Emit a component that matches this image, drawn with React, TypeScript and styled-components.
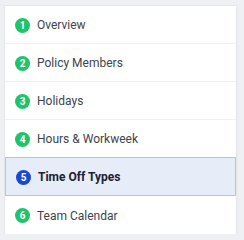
import styled, { createGlobalStyle } from 'styled-components'

const GlobalStyle = createGlobalStyle`
  body {
    margin: 0;
    background: #eff0f4;
    font-family: Roboto, "Open Sans", sans-serif;
  }
`

const Page = styled.div`
  padding: 6px 8px 0 5px;
`

const Card = styled.div`
  width: 231px;
  background: #ffffff;
  box-shadow: 0 0 0 1px #e6e7eb, 1px 1px 2px rgba(0, 0, 0, 0.06);
  display: flex;
  flex-direction: column;
`

const Row = styled.div<{ $active?: boolean }>`
  box-sizing: border-box;
  height: ${(p) => (p.$active ? '39px' : '38px')};
  margin-top: ${(p) => (p.$active ? '-1px' : '0')};
  display: flex;
  align-items: center;
  gap: 7px;
  padding: 1px 0 0 10px;
  background: ${(p) => (p.$active ? '#e6edf9' : '#ffffff')};
  border: ${(p) => (p.$active ? '1px solid #adc6f1' : 'none')};
  border-bottom: 1px solid ${(p) => (p.$active ? '#adc6f1' : '#f0f1f3')};
  &:last-child {
    border-bottom: none;
  }
`

const Step = styled.span<{ $active?: boolean }>`
  width: 15px;
  height: 15px;
  border-radius: 50%;
  background: ${(p) => (p.$active ? '#1748d1' : '#1fc469')};
  color: #ffffff;
  font-size: 10px;
  font-weight: 700;
  display: flex;
  align-items: center;
  justify-content: center;
  flex-shrink: 0;
`

const Label = styled.span<{ $active?: boolean }>`
  font-size: 12px;
  color: ${(p) => (p.$active ? '#1d2230' : '#40444c')};
  font-weight: ${(p) => (p.$active ? 700 : 400)};
`

const steps = ['Overview', 'Policy Members', 'Holidays', 'Hours & Workweek', 'Time Off Types', 'Team Calendar']
const current = 4

export default function App() {
  return (
    <>
      <GlobalStyle />
      <Page>
        <Card>
          {steps.map((s, i) => (
            <Row key={s} $active={i === current}>
              <Step $active={i === current}>{i + 1}</Step>
              <Label $active={i === current}>{s}</Label>
            </Row>
          ))}
        </Card>
      </Page>
    </>
  )
}
